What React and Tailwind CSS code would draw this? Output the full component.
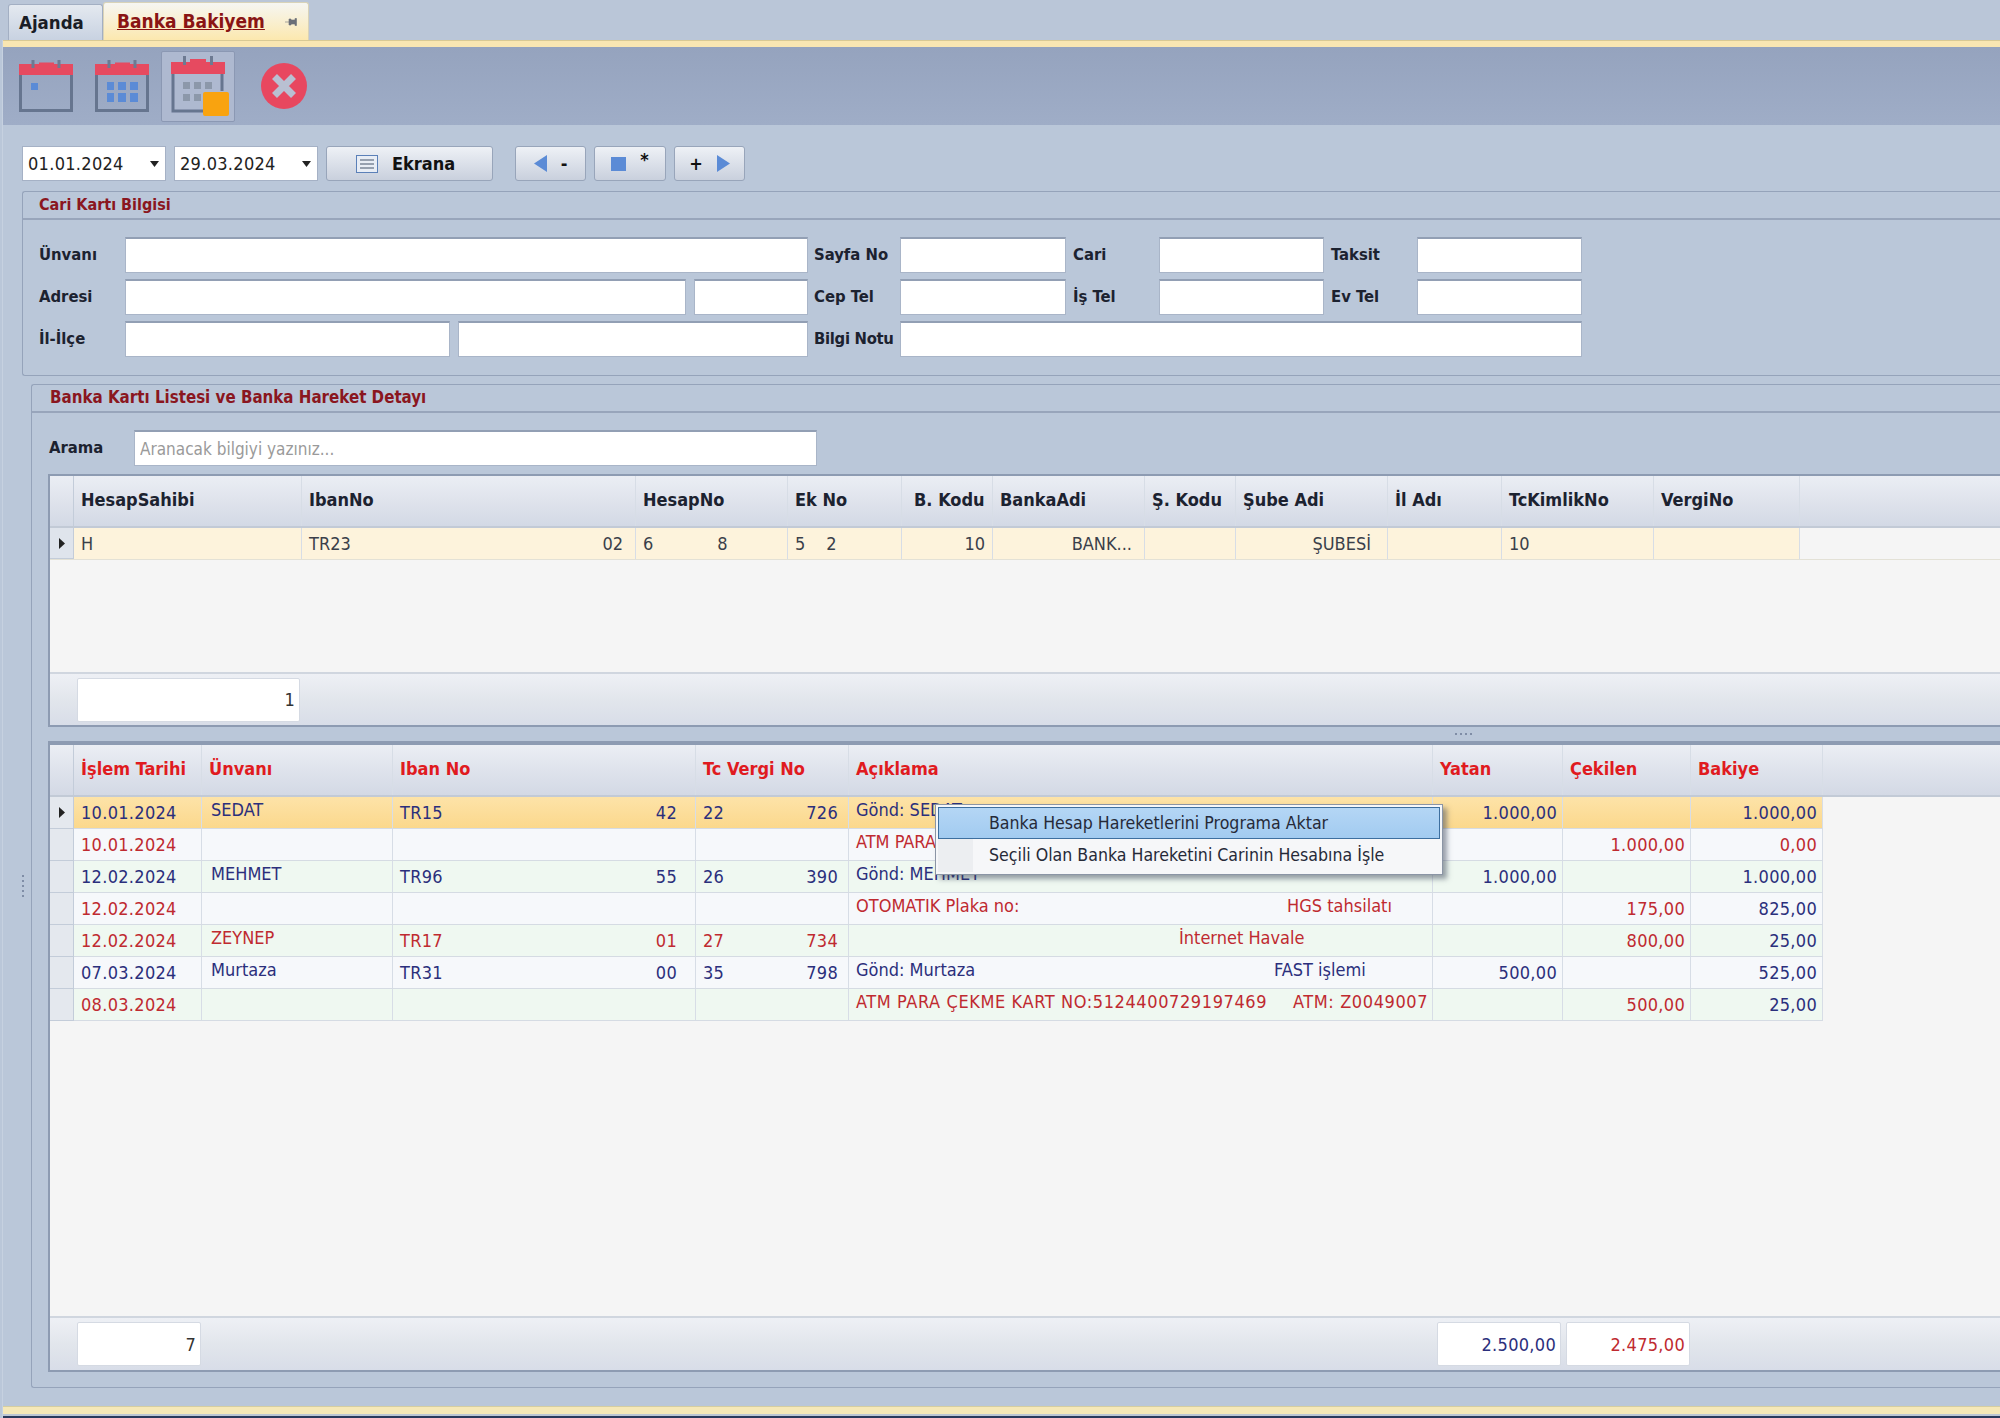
const NAVY = "text-[#2b2f7c]";
const RED = "text-[#bf2a30]";

function Field({ className }) {
  return <input readOnly className={`h-[36px] bg-white border border-[#a9b5c8] border-t-2 border-t-[#929fb4] outline-none shrink-0 ${className}`} />;
}

function Label({ className, children }) {
  return <div className={`font-bold text-[#1c2230] text-[16.5px] whitespace-nowrap shrink-0 pt-[1px] ${className}`}>{children}</div>;
}

function Calendar({ children, outline = "#66758f" }) {
  return (
    <svg width="56" height="54" viewBox="-1 -1 56 54">
      <path d="M1.5 15V50.5H52.5V15" fill="none" stroke={outline} strokeWidth="3" />
      <path d="M0 4H20V2.5H35V4H54V15H0Z" fill="#e64a60" />
      <rect x="12.5" y="0" width="3" height="8" fill="#6d7a92" />
      <rect x="38.5" y="0" width="3" height="8" fill="#6d7a92" />
      {children}
    </svg>
  );
}

function Triangle({ dir, color = "#5b8bd6", w = 13, h = 17 }) {
  const pts = dir === "left" ? `${w},0 ${w},${h} 0,${h / 2}` : dir === "right" ? `0,0 ${w},${h / 2} 0,${h}` : `0,0 ${w},0 ${w / 2},${h}`;
  return (
    <svg width={w} height={h} viewBox={`0 0 ${w} ${h}`} className="shrink-0">
      <polygon points={pts} fill={color} />
    </svg>
  );
}

function DateBox({ value }) {
  return (
    <div className="w-[144px] h-[35px] bg-white border border-[#a5b1c5] flex items-center justify-between pl-[5px] pr-[6px] text-[18px] tracking-[0.3px] text-[#222]">
      <span>{value}</span>
      <Triangle dir="down" color="#222" w={9} h={6} />
    </div>
  );
}

const navBtn = "h-[35px] rounded-[3px] border border-[#98a5ba] bg-gradient-to-b from-[#eef1f6] to-[#c9d0dd] flex items-center justify-center text-[#111] font-bold text-[18px] shrink-0";

const gridOneCols = ["w-[228px]", "w-[334px]", "w-[152px]", "w-[114px]", "w-[91px]", "w-[152px]", "w-[91px]", "w-[152px]", "w-[114px]", "w-[152px]", "w-[146px]"];
const gridOneHead = ["HesapSahibi", "IbanNo", "HesapNo", "Ek No", "B. Kodu", "BankaAdi", "Ş. Kodu", "Şube Adi", "İl Adı", "TcKimlikNo", "VergiNo"];

const gridTwoCols = ["w-[128px]", "w-[191px]", "w-[303px]", "w-[153px]", "w-[584px]", "w-[130px]", "w-[128px]", "w-[132px]"];
const gridTwoHead = ["İşlem Tarihi", "Ünvanı", "Iban No", "Tc Vergi No", "Açıklama", "Yatan", "Çekilen", "Bakiye"];

const rows = [
  { bg: "bg-gradient-to-b from-[#fde3a8] to-[#fbd88c]", color: NAVY, date: "10.01.2024", name: "SEDAT", iban: ["TR15", "42"], tc: ["22", "726"], desc: ["Gönd: SEDAT", ""], yatan: "1.000,00", cekilen: "", bakiye: "1.000,00", active: true },
  { bg: "bg-[#f6f8fb]", color: RED, date: "10.01.2024", name: "", iban: ["", ""], tc: ["", ""], desc: ["ATM PARA ÇEKME", ""], yatan: "", cekilen: "1.000,00", bakiye: "0,00" },
  { bg: "bg-[#eff8f1]", color: NAVY, date: "12.02.2024", name: "MEHMET", iban: ["TR96", "55"], tc: ["26", "390"], desc: ["Gönd: MEHMET", ""], yatan: "1.000,00", cekilen: "", bakiye: "1.000,00" },
  { bg: "bg-[#f6f8fb]", color: RED, date: "12.02.2024", name: "", iban: ["", ""], tc: ["", ""], desc: ["OTOMATIK Plaka no:", "HGS tahsilatı"], descWidth: "w-[431px]", yatan: "", cekilen: "175,00", bakiye: "825,00", bakiyeNavy: true },
  { bg: "bg-[#eff8f1]", color: RED, date: "12.02.2024", name: "ZEYNEP", iban: ["TR17", "01"], tc: ["27", "734"], desc: ["", "İnternet Havale"], descWidth: "w-[323px]", yatan: "", cekilen: "800,00", bakiye: "25,00", bakiyeNavy: true },
  { bg: "bg-[#f6f8fb]", color: NAVY, date: "07.03.2024", name: "Murtaza", iban: ["TR31", "00"], tc: ["35", "798"], desc: ["Gönd: Murtaza", "FAST işlemi"], descWidth: "w-[418px]", yatan: "500,00", cekilen: "", bakiye: "525,00" },
  { bg: "bg-[#eff8f1]", color: RED, date: "08.03.2024", name: "", iban: ["", ""], tc: ["", ""], desc: ["ATM PARA ÇEKME KART NO:5124400729197469", "ATM: Z0049007"], descWidth: "w-[437px]", descTrack: "tracking-[0.6px]", yatan: "", cekilen: "500,00", bakiye: "25,00", bakiyeNavy: true },
];

const headBg = "bg-gradient-to-b from-[#ebeef4] via-[#dfe3ec] to-[#d3d9e5]";
const footBg = "bg-gradient-to-b from-[#eef0f5] via-[#e2e6ec] to-[#d8dde8]";

function Indicator({ active, className }) {
  return (
    <div className={`w-[24px] shrink-0 flex items-center justify-center border-r border-b border-[#c3ccd9] ${className}`}>
      {active && <Triangle dir="right" color="#222" w={6} h={11} />}
    </div>
  );
}

function Cell({ width, className = "", children }) {
  return <div className={`${width} shrink-0 h-full flex items-center px-[7px] border-r border-[#d7dde6] whitespace-nowrap overflow-hidden ${className}`}>{children}</div>;
}

function HeadRow({ cols, heads, className, textColor }) {
  return (
    <div className={`${className} ${headBg} flex border-b-2 border-[#c2cad6] shrink-0`}>
      <Indicator className="border-b-0" />
      {heads.map((h, i) => (
        <Cell key={h} width={cols[i]} className={`border-[#b9c3d2] pb-[3px] ${h === "B. Kodu" ? "pl-[12px]" : ""}`}>
          <span className={`font-bold text-[18px] ${textColor}`}>{h}</span>
        </Cell>
      ))}
    </div>
  );
}

function FootBox({ className, children }) {
  return <div className={`h-[44px] bg-white rounded-[2px] border border-[#d5dae3] flex items-center justify-end pr-[4px] text-[18px] tracking-[0.3px] shrink-0 ${className}`}>{children}</div>;
}

function GridOne() {
  const c = gridOneCols;
  return (
    <div className="ml-[16px] h-[253px] flex flex-col bg-[#f5f5f5] border-l-2 border-t-2 border-b-2 border-[#8d9bb2] text-[18px] text-[#3a3f4a]">
      <HeadRow cols={gridOneCols} heads={gridOneHead} className="h-[52px]" textColor="text-[#1c2230]" />
      <div className="h-[32px] flex shrink-0 border-b border-[#e3e1d6]">
        <Indicator active className="bg-[#dfe4ec]" />
        <div className="flex h-full bg-[#fdf3dc]">
          <Cell width={c[0]}>H</Cell>
          <Cell width={c[1]} className="justify-between pr-[12px]"><span>TR23</span><span>02</span></Cell>
          <Cell width={c[2]} className="gap-[64px]"><span>6</span><span>8</span></Cell>
          <Cell width={c[3]} className="gap-[21px]"><span>5</span><span>2</span></Cell>
          <Cell width={c[4]} className="justify-end">10</Cell>
          <Cell width={c[5]} className="justify-end pr-[12px]">BANK...</Cell>
          <Cell width={c[6]} />
          <Cell width={c[7]} className="justify-end pr-[16px]">ŞUBESİ</Cell>
          <Cell width={c[8]} />
          <Cell width={c[9]}>10</Cell>
          <Cell width={c[10]} />
        </div>
      </div>
      <div className="flex-1" />
      <div className={`h-[53px] shrink-0 ${footBg} border-t-2 border-[#d0d6df] flex items-center pl-[27px]`}>
        <FootBox className="w-[223px] text-[#333]">1</FootBox>
      </div>
    </div>
  );
}

function DataRow({ row }) {
  const c = gridTwoCols;
  const digits = "tracking-[0.3px]";
  return (
    <div className="h-[32px] flex shrink-0">
      <Indicator active={row.active} className="bg-[#e4e8ee]" />
      <div className={`flex h-full border-b border-[#d5dbe3] ${row.bg} ${row.color}`}>
        <Cell width={c[0]} className={digits}>{row.date}</Cell>
        <Cell width={c[1]} className="pb-[6px] pl-[9px]">{row.name}</Cell>
        <Cell width={c[2]} className={`justify-between pr-[18px] ${digits}`}><span>{row.iban[0]}</span><span>{row.iban[1]}</span></Cell>
        <Cell width={c[3]} className={`justify-between pr-[10px] ${digits}`}><span>{row.tc[0]}</span><span>{row.tc[1]}</span></Cell>
        <Cell width={c[4]} className={`pb-[6px] ${row.descTrack || ""}`}>
          {row.descWidth ? <span className={`${row.descWidth} shrink-0`}>{row.desc[0]}</span> : <span>{row.desc[0]}</span>}
          <span>{row.desc[1]}</span>
        </Cell>
        <Cell width={c[5]} className={`justify-end pr-[5px] ${digits}`}>{row.yatan}</Cell>
        <Cell width={c[6]} className={`justify-end pr-[5px] ${digits}`}>{row.cekilen}</Cell>
        <Cell width={c[7]} className={`justify-end pr-[5px] ${digits} ${row.bakiyeNavy ? NAVY : ""}`}>{row.bakiye}</Cell>
      </div>
    </div>
  );
}

function ContextMenu() {
  return (
    <div className="absolute left-[885px] top-[59px] w-[508px] h-[71px] bg-[#f6f7f9] border border-[#8b95a5] p-[2px] shadow-[4px_4px_5px_rgba(60,70,90,0.5)] text-[17.6px] text-[#262a38]">
      <div className="h-[32px] flex items-center pl-[50px] bg-gradient-to-b from-[#b4d6f5] to-[#a2cbf0] border border-[#3d6f9f]">Banka Hesap Hareketlerini Programa Aktar</div>
      <div className="h-[33px] flex items-center">
        <div className="w-[35px] h-full bg-[#eceef1] shrink-0" />
        <div className="pl-[16px]">Seçili Olan Banka Hareketini Carinin Hesabına İşle</div>
      </div>
    </div>
  );
}

function GridTwo() {
  return (
    <div className="relative ml-[16px] h-[631px] flex flex-col bg-[#f5f5f5] border-l-2 border-t-4 border-b-2 border-[#8d9bb2] text-[18px]">
      <HeadRow cols={gridTwoCols} heads={gridTwoHead} className="h-[52px]" textColor="text-[#e01b1f]" />
      {rows.map((r) => <DataRow key={r.date + r.bakiye} row={r} />)}
      <div className="flex-1" />
      <div className={`h-[54px] shrink-0 ${footBg} border-t-2 border-[#d0d6df] flex items-center pl-[27px]`}>
        <FootBox className="w-[124px] text-[#333]">7</FootBox>
        <FootBox className={`w-[124px] ml-[1236px] ${NAVY}`}>2.500,00</FootBox>
        <FootBox className={`w-[124px] ml-[5px] ${RED}`}>2.475,00</FootBox>
      </div>
      <ContextMenu />
    </div>
  );
}

export default function App() {
  return (
    <div className="w-[2000px] h-[1418px] overflow-hidden flex flex-col bg-[#bac7d9] font-['DejaVu_Sans_Condensed','DejaVu_Sans',sans-serif]">
      <div className="h-[40px] shrink-0 flex items-end pl-[8px] bg-[#bac6d8]">
        <div className="w-[95px] h-[36px] rounded-t-[3px] border border-b-0 border-[#a3afc3] bg-gradient-to-b from-[#e4e9f0] to-[#c8d2e1] flex items-center pl-[10px] font-bold text-[18.5px] text-[#1a1d26]">Ajanda</div>
        <div className="w-[206px] h-[38px] rounded-t-[3px] border border-b-0 border-[#d9d3b8] bg-gradient-to-b from-[#f6f6f2] to-[#fce8ae] flex items-center pl-[13px] font-bold text-[19px] text-[#8a1414]">
          <span className="underline">Banka Bakiyem</span>
          <svg width="14" height="12" viewBox="0 0 14 12" className="ml-[19px]">
            <path d="M1 6H5M5 3H7V9H5ZM7 4H11V8H7ZM11 2.5H12.5V9.5H11Z" fill="#6b7078" stroke="#6b7078" strokeWidth="0.6" />
          </svg>
        </div>
      </div>

      <div className="ml-[2px] flex-1 flex flex-col min-h-0 border-l border-[#c6d1e0]">
        <div className="h-[7px] shrink-0 bg-[#f9e6b2] border-t border-[#d9c994]" />

        <div className="h-[78px] shrink-0 bg-gradient-to-b from-[#95a3be] to-[#9fadc7] flex items-center pl-[15px]">
          <Calendar>
            <rect x="12" y="23" width="7" height="7" fill="#5b8bd6" />
          </Calendar>
          <div className="ml-[20px]">
            <Calendar>
              <path d="M12 22h7v8h-7zM23 22h8v8h-8zM35 22h8v8h-8zM12 33h7v9h-7zM23 33h8v9h-8zM35 33h8v9h-8z" fill="#5b8bd6" />
            </Calendar>
          </div>
          <div className="ml-[11px] w-[74px] h-[71px] bg-[#aeb9d0] border border-[#8b98b3] rounded-[2px] flex items-center justify-center">
            <svg width="64" height="62" viewBox="0 0 64 62">
              <path d="M7 18V56H38M56 18V36" fill="none" stroke="#66758f" strokeWidth="3" />
              <path d="M5 7H24V4H40V7H59V19H5Z" fill="#e64a60" />
              <rect x="17" y="1" width="3" height="9" fill="#6d7a92" />
              <rect x="44" y="1" width="3" height="9" fill="#6d7a92" />
              <path d="M17 27h7v7h-7zM28 27h7v7h-7zM39 27h7v7h-7zM17 39h7v7h-7zM28 39h7v7h-7z" fill="#8c98aa" />
              <rect x="37" y="37" width="26" height="24" rx="2" fill="#f9a30f" />
            </svg>
          </div>
          <svg width="46" height="46" viewBox="0 0 46 46" className="ml-[26px]">
            <circle cx="23" cy="23" r="23" fill="#e8475f" />
            <path d="M13.5 13.5L32.5 32.5M32.5 13.5L13.5 32.5" stroke="#b9c0d2" strokeWidth="7" />
          </svg>
        </div>

        <div className="h-[35px] mt-[21px] shrink-0 flex items-center pl-[19px]">
          <DateBox value="01.01.2024" />
          <div className="ml-[8px]"><DateBox value="29.03.2024" /></div>
          <div className={`${navBtn} w-[167px] ml-[8px] gap-[14px] pr-[8px]`}>
            <svg width="22" height="18" viewBox="0 0 22 18">
              <rect x="0.5" y="0.5" width="21" height="17" fill="#e8edf5" stroke="#5b80b8" />
              <path d="M4 5H18M4 9H18M4 13H18" stroke="#7b8798" strokeWidth="1.5" />
            </svg>
            <span>Ekrana</span>
          </div>
          <div className={`${navBtn} w-[71px] ml-[22px] gap-[14px]`}><Triangle dir="left" /><span>-</span></div>
          <div className={`${navBtn} w-[72px] ml-[8px] gap-[14px]`}>
            <span className="w-[15px] h-[14px] bg-[#5b8bd6]" /><span className="pb-[8px]">*</span>
          </div>
          <div className={`${navBtn} w-[71px] ml-[8px] gap-[14px]`}><span>+</span><Triangle dir="right" /></div>
        </div>

        <div className="ml-[19px] mt-[10px] h-[185px] shrink-0 border border-r-0 border-[#95a3ba] rounded-l-[3px] flex flex-col">
          <div className="h-[28px] shrink-0 border-b-2 border-[#98a5bb] flex items-center pl-[16px] font-bold text-[16px] text-[#8a1620]">Cari Kartı Bilgisi</div>
          <div className="pt-[17px] pl-[16px] flex flex-col gap-[6px]">
            <div className="flex items-center">
              <Label className="w-[86px]">Ünvanı</Label>
              <Field className="w-[683px]" />
              <Label className="w-[86px] ml-[6px]">Sayfa No</Label>
              <Field className="w-[166px]" />
              <Label className="w-[86px] ml-[7px]">Cari</Label>
              <Field className="w-[165px]" />
              <Label className="w-[86px] ml-[7px]">Taksit</Label>
              <Field className="w-[165px]" />
            </div>
            <div className="flex items-center">
              <Label className="w-[86px]">Adresi</Label>
              <Field className="w-[561px]" />
              <Field className="w-[114px] ml-[8px]" />
              <Label className="w-[86px] ml-[6px]">Cep Tel</Label>
              <Field className="w-[166px]" />
              <Label className="w-[86px] ml-[7px]">İş Tel</Label>
              <Field className="w-[165px]" />
              <Label className="w-[86px] ml-[7px]">Ev Tel</Label>
              <Field className="w-[165px]" />
            </div>
            <div className="flex items-center">
              <Label className="w-[86px]">İl-İlçe</Label>
              <Field className="w-[325px]" />
              <Field className="w-[350px] ml-[8px]" />
              <Label className="w-[86px] ml-[6px] tracking-[-0.3px]">Bilgi Notu</Label>
              <Field className="w-[682px]" />
            </div>
          </div>
        </div>

        <div className="mt-[8px] h-[1004px] shrink-0 flex">
          <div className="w-[28px] shrink-0 flex flex-col items-end justify-center gap-[3px] pr-[7px]">
            {[0, 1, 2, 3, 4].map((d) => <span key={d} className="w-[2px] h-[2px] bg-[#7f8da6]" />)}
          </div>
          <div className="flex-1 min-w-0 border border-r-0 border-[#95a3ba] rounded-l-[3px] flex flex-col">
            <div className="h-[28px] shrink-0 border-b-2 border-[#98a5bb] flex items-center pl-[18px] font-bold text-[16.8px] text-[#8a1620]">Banka Kartı Listesi ve Banka Hareket Detayı</div>
            <div className="mt-[17px] h-[36px] flex items-center pl-[17px] shrink-0">
              <Label className="w-[85px]">Arama</Label>
              <input readOnly placeholder="Aranacak bilgiyi yazınız..." className="w-[683px] h-[36px] pl-[5px] bg-white border border-[#a9b5c8] border-t-2 border-t-[#929fb4] outline-none text-[17px] placeholder:text-[#9a9a9a]" />
            </div>
            <div className="mt-[8px]"><GridOne /></div>
            <div className="h-[14px] shrink-0 flex items-center pl-[1423px] gap-[3px]">
              {[0, 1, 2, 3].map((d) => <span key={d} className="w-[2px] h-[2px] bg-[#7f8da6]" />)}
            </div>
            <GridTwo />
          </div>
        </div>

        <div className="mt-[18px] h-[8px] shrink-0 bg-[#f5e8b8] border-t border-[#d5cda0]" />
        <div className="h-[2px] shrink-0 bg-[#bcc6d4]" />
        <div className="flex-1 bg-[#2a3a5c]" />
      </div>
    </div>
  );
}
